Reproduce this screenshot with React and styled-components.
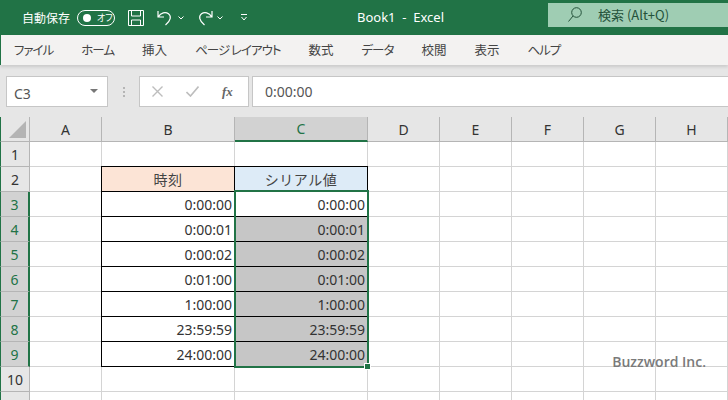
import React from "react";
import styled, { createGlobalStyle } from "styled-components";

const FONT = `"Noto Sans CJK JP", "Noto Sans", sans-serif`;
const CELL_FONT = `"Noto Sans", "Noto Sans CJK JP", sans-serif`;

const GlobalStyle = createGlobalStyle`
  html, body {
    margin: 0;
    padding: 0;
    background: #fff;
    overflow: hidden;
  }
`;

const Page = styled.div`
  width: 728px;
  height: 400px;
  overflow: hidden;
  position: relative;
  font-family: ${FONT};
  font-feature-settings: "palt";
  background: #e6e6e6;
`;

const TitleBar = styled.div`
  height: 35px;
  background: #217346;
  color: #fff;
  display: flex;
  align-items: center;
  padding-left: 22px;
`;

const AutoSave = styled.span`
  font-size: 12px;
  width: 48px;
  white-space: nowrap;
  margin-top: -1px;
`;

const Toggle = styled.div`
  width: 38px;
  height: 16px;
  box-sizing: border-box;
  margin-left: 7px;
  border: 1px solid #fff;
  border-radius: 8px;
  display: flex;
  align-items: center;
  padding-left: 5px;
  gap: 6px;
  font-size: 9px;
  line-height: 1;
  flex: none;
  white-space: nowrap;

  &::before {
    content: "";
    width: 8px;
    height: 8px;
    border-radius: 50%;
    background: #fff;
    flex: none;
  }
`;

const QuickIcon = styled.svg`
  display: block;
  flex: none;
  margin-left: ${(p) => p.$left}px;
`;

const DocTitle = styled.div`
  width: 90px;
  margin-left: 110px;
  margin-top: -2px;
  flex: none;
  font-size: 13px;
  white-space: pre;
  font-family: "Noto Sans", sans-serif;
`;

const SearchBox = styled.div`
  margin-left: 101px;
  width: 180px;
  height: 24px;
  margin-top: -6px;
  background: #9fcdb3;
  color: #24523a;
  display: flex;
  align-items: center;
  padding-left: 20px;
  gap: 16px;
  font-size: 13px;
  flex: none;
`;

const TabBar = styled.div`
  height: 30px;
  background: #f3f2f1;
  border-left: 1px solid #217346;
  box-sizing: border-box;
  display: flex;
  align-items: center;
  padding-left: 13px;
  gap: 28px;
  box-shadow: 0 2px 3px rgba(0, 0, 0, 0.12);
  position: relative;
`;

const Tab = styled.span`
  font-size: 12.5px;
  color: #444;
  white-space: pre;
  letter-spacing: ${(p) => (p.$kana ? "-1px" : "0")};
  margin-top: -1px;
`;

const FormulaBar = styled.div`
  height: 52px;
  box-sizing: border-box;
  padding: 11px 0 10px 6px;
  display: flex;
  align-items: stretch;
  background: #e6e6e6;
`;

const FieldBox = styled.div`
  background: #fff;
  border: 1px solid #c6c6c6;
  box-sizing: border-box;
  display: flex;
  align-items: center;
`;

const NameBox = styled(FieldBox)`
  width: 102px;
  padding: 3px 9px 0 7px;
  justify-content: space-between;
  font-size: 14px;
  color: #555;
  font-family: ${CELL_FONT};

  &::after {
    content: "";
    border-left: 4px solid transparent;
    border-right: 4px solid transparent;
    border-top: 4px solid #777;
    margin-top: -5px;
  }
`;

const Grip = styled.div`
  width: 31px;
  display: flex;
  flex-direction: column;
  align-items: center;
  justify-content: center;
  gap: 2px;

  i {
    width: 2px;
    height: 2px;
    background: #b5b5b5;
  }
`;

const ActionBox = styled(FieldBox)`
  width: 110px;
  padding-left: 12px;
  gap: 23px;
  color: #bdbdbd;
`;

const FxLabel = styled.span`
  font-family: "Liberation Serif", serif;
  font-style: italic;
  font-weight: 700;
  font-size: 13px;
  color: #666;
`;

const FormulaInput = styled(FieldBox)`
  flex: 1;
  margin-left: 3px;
  padding-left: 12px;
  border-right: 0;
  font-size: 14px;
  color: #555;
  font-family: ${CELL_FONT};
`;

const Sheet = styled.div`
  display: grid;
  position: relative;
  grid-template-columns: 30px 72px 133px 133px 72px 72px 72px 72px 72px;
  grid-template-rows: repeat(12, 25px);
  background: #fff;
  font-family: ${CELL_FONT};
  color: #333;
  font-size: 14px;
`;

const Corner = styled.div`
  background: #e6e6e6;
  border-right: 1px solid #b5b5b5;
  border-bottom: 1px solid #b5b5b5;
  border-left: 1px solid #217346;
  box-sizing: border-box;
  display: flex;
  align-items: flex-end;
  justify-content: flex-end;
  padding: 0 3px 3px 0;

  &::after {
    content: "";
    border-style: solid;
    border-width: 0 0 17px 17px;
    border-color: transparent transparent #b4b4b4 transparent;
  }
`;

const ColHead = styled.div`
  box-sizing: border-box;
  display: flex;
  align-items: center;
  justify-content: center;
  background: ${(p) => (p.$active ? "#d2d2d2" : "#e6e6e6")};
  color: ${(p) => (p.$active ? "#217346" : "#333")};
  border-right: 1px solid #b5b5b5;
  border-bottom: ${(p) => (p.$active ? "2px solid #217346" : "1px solid #b5b5b5")};
`;

const RowHead = styled.div`
  box-sizing: border-box;
  display: flex;
  align-items: center;
  justify-content: center;
  background: ${(p) => (p.$active ? "#d2d2d2" : "#e6e6e6")};
  color: ${(p) => (p.$active ? "#217346" : "#333")};
  border-left: 1px solid #217346;
  border-bottom: 1px solid #b5b5b5;
  border-right: ${(p) => (p.$active ? "2px solid #217346" : "1px solid #b5b5b5")};
`;

const Cell = styled.div`
  box-sizing: border-box;
  border-right: 1px solid #d4d4d4;
  border-bottom: 1px solid #d4d4d4;
`;

const DataCell = styled.div`
  box-sizing: border-box;
  display: flex;
  align-items: center;
  justify-content: ${(p) => (p.$head ? "center" : "flex-end")};
  padding: ${(p) => (p.$head ? "0" : "1px 2px 0 0")};
  white-space: nowrap;
  background: ${(p) => p.$bg || "#fff"};
  border-right: 1px solid #000;
  border-bottom: 1px solid #000;
  border-left: ${(p) => (p.$first ? "1px solid #000" : "0")};
  border-top: ${(p) => (p.$top ? "1px solid #000" : "0")};
  margin-left: ${(p) => (p.$first ? "-1px" : "0")};
  margin-top: ${(p) => (p.$top ? "-1px" : "0")};
  font-family: ${(p) => (p.$head ? FONT : CELL_FONT)};
  font-size: 14px;
  font-feature-settings: normal;
  letter-spacing: ${(p) => (p.$head ? "0.5px" : "0")};
  color: ${(p) => (p.$head ? "#444" : "#333")};
`;

const Selection = styled.div`
  position: absolute;
  grid-column: 4 / 5;
  grid-row: 4 / 11;
  inset: -2px -1px -1px -1px;
  border: 2px solid #217346;
  pointer-events: none;

  &::after {
    content: "";
    position: absolute;
    right: -4px;
    bottom: -4px;
    width: 5px;
    height: 5px;
    background: #217346;
    border: 1px solid #fff;
  }
`;

const Watermark = styled.div`
  position: absolute;
  right: 22px;
  top: 352px;
  font-family: "Open Sans", sans-serif;
  font-weight: 600;
  font-size: 14px;
  color: #7a7a7a;
`;

const tabs = [
  { label: "ファイル", kana: true },
  { label: "ホーム", kana: true },
  { label: "挿入" },
  { label: "ページ レイアウト", kana: true },
  { label: "数式" },
  { label: "データ", kana: true },
  { label: "校閲" },
  { label: "表示" },
  { label: "ヘルプ", kana: true },
];
const columns = ["A", "B", "C", "D", "E", "F", "G", "H"];
const times = ["0:00:00", "0:00:01", "0:00:02", "0:01:00", "1:00:00", "23:59:59", "24:00:00"];

const Caret = ({ left }) => (
  <QuickIcon $left={left} width="6" height="4" viewBox="0 0 6 4" fill="none" stroke="#fff" strokeWidth="1">
    <path d="M0.5 0.5 L3 3 L5.5 0.5" />
  </QuickIcon>
);

const renderRow = (row) => {
  const r = row + 1;
  const activeRow = r >= 3 && r <= 9;
  const cells = columns.map((col) => {
    const key = `${col}${r}`;
    if (r === 2 && col === "B") return <DataCell key={key} $head $first $top $bg="#fce4d6">時刻</DataCell>;
    if (r === 2 && col === "C") return <DataCell key={key} $head $top $bg="#ddebf7">シリアル値</DataCell>;
    if (activeRow && col === "B") return <DataCell key={key} $first>{times[r - 3]}</DataCell>;
    if (activeRow && col === "C") return <DataCell key={key} $bg={r === 3 ? "#fff" : "#c6c6c6"}>{times[r - 3]}</DataCell>;
    return <Cell key={key} />;
  });
  return (
    <React.Fragment key={r}>
      <RowHead $active={activeRow}>{r}</RowHead>
      {cells}
    </React.Fragment>
  );
};

export default function App() {
  return (
    <Page>
      <GlobalStyle />
      <TitleBar>
        <AutoSave>自動保存</AutoSave>
        <Toggle>オフ</Toggle>
        <QuickIcon $left={13} width="16" height="16" viewBox="0 0 16 16" fill="none" stroke="#fff" strokeWidth="1">
          <path d="M0.5 0.5 H15.5 V15.5 H0.5 Z M3.5 0.5 V6 H12.5 V0.5 M3.5 15.5 V10 H12.5 V15.5" />
        </QuickIcon>
        <QuickIcon $left={13} width="16" height="16" viewBox="0 0 16 16" fill="none" stroke="#fff" strokeWidth="1.2">
          <path d="M1 1 V7 H7 M1.2 6.8 C4 2.5 8.5 1.5 11.5 3.8 C14.5 6.2 14 10.5 8.5 15" />
        </QuickIcon>
        <Caret left={5} />
        <QuickIcon $left={13} width="16" height="16" viewBox="0 0 16 16" fill="none" stroke="#fff" strokeWidth="1.2">
          <path d="M15 1 V7 H9 M14.8 6.8 C12 2.5 7.5 1.5 4.5 3.8 C1.5 6.2 2 10.5 7.5 15" />
        </QuickIcon>
        <Caret left={4} />
        <QuickIcon $left={18} width="6" height="7" viewBox="0 0 6 7" fill="none" stroke="#fff" strokeWidth="1">
          <path d="M0 0.5 H6 M0.5 3 L3 6 L5.5 3" />
        </QuickIcon>
        <DocTitle>Book1  -  Excel</DocTitle>
        <SearchBox>
          <svg width="14" height="15" viewBox="0 0 14 15" fill="none" stroke="#24523a" strokeWidth="1">
            <circle cx="8.5" cy="5.5" r="4.8" />
            <path d="M5 9 L0.5 14.5" />
          </svg>
          <span>検索 (Alt+Q)</span>
        </SearchBox>
      </TitleBar>
      <TabBar>
        {tabs.map((t) => (
          <Tab key={t.label} $kana={t.kana}>{t.label}</Tab>
        ))}
      </TabBar>
      <FormulaBar>
        <NameBox>C3</NameBox>
        <Grip>
          <i />
          <i />
          <i />
        </Grip>
        <ActionBox>
          <svg width="11" height="11" viewBox="0 0 11 11" fill="none" stroke="#bdbdbd" strokeWidth="1.4">
            <path d="M0.5 0.5 L10.5 10.5 M10.5 0.5 L0.5 10.5" />
          </svg>
          <svg width="13" height="11" viewBox="0 0 13 11" fill="none" stroke="#bdbdbd" strokeWidth="1.6">
            <path d="M0.5 6 L4.5 10 L12.5 0.5" />
          </svg>
          <FxLabel>fx</FxLabel>
        </ActionBox>
        <FormulaInput>0:00:00</FormulaInput>
      </FormulaBar>
      <Sheet>
        <Corner />
        {columns.map((c) => (
          <ColHead key={c} $active={c === "C"}>{c}</ColHead>
        ))}
        {Array.from({ length: 11 }, (_, i) => renderRow(i))}
        <Selection />
      </Sheet>
      <Watermark>Buzzword Inc.</Watermark>
    </Page>
  );
}
